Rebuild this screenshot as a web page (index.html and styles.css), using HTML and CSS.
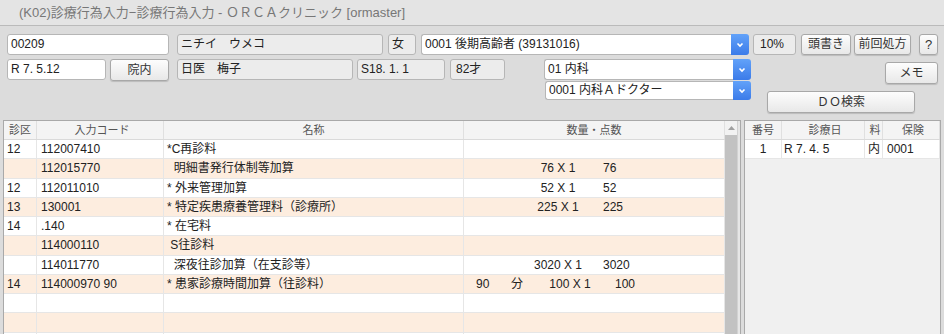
FILE: index.html
```html
<!DOCTYPE html>
<html lang="ja">
<head>
  <meta charset="UTF-8">
  <title>診療行為入力</title>
  <link rel="stylesheet" href="styles.css">
</head>
<body>
  <div class="titlebar">(K02)診療行為入力−診療行為入力 - ＯＲＣＡクリニック [ormaster]</div>

  <div class="form">
    <div class="row">
      <div class="field w-id">00209</div>
      <div class="field ro w-kana">ニチイ　ウメコ</div>
      <div class="field ro w-sex">女</div>
      <div class="combo w-ins">
        <div class="field">0001 後期高齢者 (39131016)</div>
        <div class="drop"><svg width="8" height="6" viewBox="0 0 8 6"><path d="M1.5 1.5 L4 4 L6.5 1.5" stroke="#fff" stroke-width="1.6" fill="none"/></svg></div>
      </div>
      <div class="field ro w-rate">10%</div>
      <button class="btn w-head">頭書き</button>
      <button class="btn w-prev">前回処方</button>
      <button class="btn w-help">?</button>
    </div>

    <div class="row row2">
      <div class="field w-date">R 7. 5.12</div>
      <button class="btn w-in">院内</button>
      <div class="field ro w-name">日医　梅子</div>
      <div class="field ro w-birth">S18. 1. 1</div>
      <div class="field ro w-age">82才</div>

      <div class="combos">
        <div class="combo">
          <div class="field">01 内科</div>
          <div class="drop"><svg width="8" height="6" viewBox="0 0 8 6"><path d="M1.5 1.5 L4 4 L6.5 1.5" stroke="#fff" stroke-width="1.6" fill="none"/></svg></div>
        </div>
        <div class="combo combo-doc">
          <div class="field">0001 内科Ａドクター</div>
          <div class="drop"><svg width="8" height="6" viewBox="0 0 8 6"><path d="M1.5 1.5 L4 4 L6.5 1.5" stroke="#fff" stroke-width="1.6" fill="none"/></svg></div>
        </div>
      </div>

      <div class="side">
        <button class="btn w-memo">メモ</button>
        <button class="btn w-do">ＤＯ検索</button>
      </div>
    </div>
  </div>

  <div class="lists">
    <div class="panel main">
      <div class="grid">
        <div class="tr th">
          <div class="td left">診区</div>
          <div class="td">入力コード</div>
          <div class="td">名称</div>
          <div class="td">数量・点数</div>
        </div>
        <div class="tr">
          <div class="td">12</div><div class="td">112007410</div><div class="td">*C再診料</div><div class="td num"></div>
        </div>
        <div class="tr alt">
          <div class="td"></div><div class="td">112015770</div><div class="td">  明細書発行体制等加算</div>
          <div class="td num"><span class="qty">76 X 1</span><span class="pts">76</span></div>
        </div>
        <div class="tr">
          <div class="td">12</div><div class="td">112011010</div><div class="td">* 外来管理加算</div>
          <div class="td num"><span class="qty">52 X 1</span><span class="pts">52</span></div>
        </div>
        <div class="tr alt">
          <div class="td">13</div><div class="td">130001</div><div class="td">* 特定疾患療養管理料（診療所）</div>
          <div class="td num"><span class="qty">225 X 1</span><span class="pts">225</span></div>
        </div>
        <div class="tr">
          <div class="td">14</div><div class="td">.140</div><div class="td">* 在宅料</div><div class="td num"></div>
        </div>
        <div class="tr alt">
          <div class="td"></div><div class="td">114000110</div><div class="td"> S往診料</div><div class="td num"></div>
        </div>
        <div class="tr">
          <div class="td"></div><div class="td">114011770</div><div class="td">  深夜往診加算（在支診等）</div>
          <div class="td num"><span class="qty">3020 X 1</span><span class="pts">3020</span></div>
        </div>
        <div class="tr alt">
          <div class="td">14</div><div class="td">114000970 90</div><div class="td">* 患家診療時間加算（往診料）</div>
          <div class="td num timed"><span class="min">90</span><span class="unit">分</span><span class="qty">100 X 1</span><span class="pts">100</span></div>
        </div>
        <div class="tr"><div class="td"></div><div class="td"></div><div class="td"></div><div class="td"></div></div>
        <div class="tr alt"><div class="td"></div><div class="td"></div><div class="td"></div><div class="td"></div></div>
        <div class="tr"><div class="td"></div><div class="td"></div><div class="td"></div><div class="td"></div></div>
      </div>
      <div class="scroll">
        <div class="arrow"><svg width="7" height="4" viewBox="0 0 7 4"><path d="M0 4 L3.5 0 L7 4 Z" fill="#a0a0a0"/></svg></div>
        <div class="thumb"></div>
      </div>
      <div class="gutter"></div>
    </div>

    <div class="panel history">
      <div class="tr th hist">
        <div class="td">番号</div>
        <div class="td">診療日</div>
        <div class="td">料</div>
        <div class="td">保険</div>
      </div>
      <div class="tr hist">
        <div class="td">1</div>
        <div class="td left">R 7. 4. 5</div>
        <div class="td left">内</div>
        <div class="td left">0001</div>
      </div>
    </div>
  </div>
</body>
</html>
```

FILE: styles.css
```css
* {
  box-sizing: border-box;
}

html, body {
  margin: 0;
}

body {
  width: 944px;
  height: 334px;
  overflow: hidden;
  background-color: #dcdcdc;
  color: #222;
  font: 12px "Liberation Sans", "Noto Sans CJK JP", sans-serif;
}

.titlebar {
  height: 26px;
  line-height: 25px;
  padding-left: 19px;
  font-size: 13px;
  color: #777;
  background-color: #e4e4e4;
  border-bottom: 1px solid #bababa;
  white-space: nowrap;
}

/* header form */
.form {
  padding: 8px 0 0 7px;
}

.row {
  display: flex;
  align-items: flex-start;
}

.row2 {
  margin-top: 4px;
}

.field {
  height: 21px;
  line-height: 19px;
  padding: 0 3px;
  border: 1px solid #b6b6b6;
  border-radius: 3px;
  background-color: #fff;
  white-space: nowrap;
  overflow: hidden;
}

.field.ro {
  background-color: #ececec;
}

.btn {
  height: 21px;
  padding: 0;
  border: 1px solid #a8a8a8;
  border-radius: 3px;
  background: linear-gradient(#fdfdfd, #e8e8e8);
  box-shadow: 0 1px 1px rgba(0,0,0,0.15);
  color: #333;
  font: inherit;
  line-height: 19px;
  text-align: center;
}

.combo {
  display: flex;
  height: 21px;
}

.combo .field {
  flex: 1;
  border-right: none;
  border-radius: 3px 0 0 3px;
}

.combo .drop {
  width: 18px;
  display: flex;
  align-items: center;
  justify-content: center;
  background: linear-gradient(#62a2f9, #3b7be9);
  border-radius: 0 3px 3px 0;
}

.w-id { width: 162px; }
.w-kana { width: 206px; margin-left: 8px; }
.w-sex { width: 28px; margin-left: 5px; }
.w-ins { width: 328px; margin-left: 5px; }
.w-rate { width: 43px; margin-left: 4px; padding-left: 6px; }
.w-head { width: 50px; margin-left: 5px; }
.w-prev { width: 57px; margin-left: 3px; }
.w-help { width: 19px; margin-left: 8px; font-size: 13px; }

.w-date { width: 99px; }
.w-in { width: 59px; height: 22px; margin-left: 4px; }
.w-name { width: 176px; margin-left: 8px; }
.w-birth { width: 88px; margin-left: 4px; }
.w-age { width: 55px; margin-left: 5px; padding-left: 5px; }

.combos {
  width: 207px;
  margin-left: 39px;
}

.combo-doc {
  height: 19px;
  margin: 1px 0 0 1px;
}

.combo-doc .field {
  height: 19px;
  line-height: 17px;
}

.side {
  flex: 1;
  display: flex;
  flex-direction: column;
  align-items: flex-start;
}

.w-memo {
  width: 53px;
  height: 22px;
  margin-top: 3px;
  align-self: flex-end;
  margin-right: 6px;
}

.w-do {
  width: 148px;
  height: 22px;
  margin: 7px 0 0 16px;
}

/* lists */
.lists {
  display: flex;
  gap: 3px;
  margin-top: 7px;
  padding-left: 3px;
}

.panel {
  height: 230px;
  border: 1px solid #a9a9a9;
  overflow: hidden;
}

.main {
  width: 738px;
  display: flex;
  background-color: #fff;
}

.grid {
  width: 721px;
}

.tr {
  display: grid;
  grid-template-columns: 33px 127px 300px 261px;
  height: 19.25px;
  border-bottom: 1px solid #e6e6e6;
  background-color: #fff;
}

.tr.alt {
  background-color: #fdeddf;
}

.td {
  line-height: 18px;
  padding-left: 3px;
  border-right: 1px solid #e6e6e6;
  white-space: pre;
  overflow: hidden;
}

.tr .td:nth-child(2) {
  padding-left: 4px;
}

.th {
  height: 19px;
  background-color: #f4f4f4;
  border-bottom: 1px solid #dadada;
}

.th .td {
  padding: 0;
  text-align: center;
  font-size: 11px;
  color: #555;
  border-right-color: #e0e0e0;
}

.th .td.left {
  text-align: left;
  padding-left: 5px;
}

.num {
  display: flex;
  padding-left: 0;
}

.num .qty {
  width: 80px;
  margin-left: 54px;
  text-align: center;
}

.num .pts {
  margin-left: 5px;
}

.num .min {
  width: 35px;
  margin-left: 12px;
}

.num .unit {
  width: 19px;
}

.num.timed .qty {
  margin-left: 0;
}

.scroll {
  width: 12px;
  display: flex;
  flex-direction: column;
  background-color: #f2f2f2;
}

.scroll .arrow {
  height: 14px;
  display: flex;
  align-items: center;
  justify-content: center;
}

.scroll .thumb {
  flex: 1;
  background-color: #c2c2c2;
}

.gutter {
  width: 3px;
  background-color: #e6e6e6;
  border-left: 1px solid #d2d2d2;
}

.history {
  width: 197px;
  background-color: #f0f0f0;
}

.tr.hist {
  grid-template-columns: 37px 83px 18px 57px;
}

.hist .td:first-child {
  text-align: center;
  padding: 0;
}

.hist .td.left {
  padding-left: 2px;
}

.hist .td:nth-child(3) {
  padding-left: 3px;
}

.hist .td:nth-child(4) {
  padding-left: 4px;
}
```
